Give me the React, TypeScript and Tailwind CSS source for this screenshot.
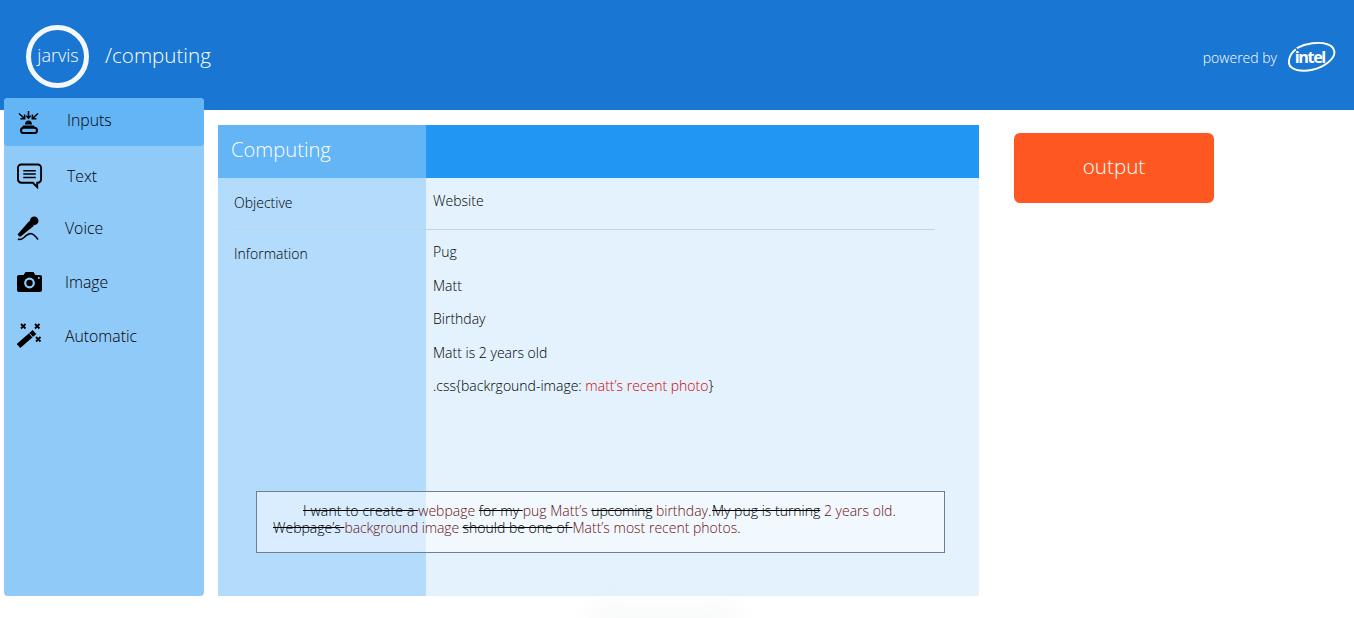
import React from 'react';

const InputsIcon = () => (
  <svg width="24" height="23" viewBox="0 0 24 23" fill="none" stroke="#000" strokeWidth="1.500">
    <path d="M11.500 0v7M9.300 4.800l2.200 2.400 2.200-2.400M2 2.500 7.500 7.500M3.500 7.800l4.200-.100L7.600 3.500M21 2.500 15.500 7.500M19.500 7.800l-4.200-.100.100-4.200" />
    <path d="M8 13.500c0-2.500 1.500-4 3.500-4s3.500 1.500 3.500 4z" fill="#000" stroke="none" />
    <path d="M6 14.500h11l1 2.500H5z" fill="#000" stroke="none" />
    <rect x="4" y="16.800" width="16" height="5.200" rx="2.600" strokeWidth="2" />
  </svg>
);

const TextIcon = () => (
  <svg width="27" height="26" viewBox="0 0 27 26" fill="none" stroke="#000" strokeWidth="2">
    <path d="M4.500 1h17A3.500 3.500 0 0 1 25 4.500v12a3.500 3.500 0 0 1-3.500 3.500h-.5v4.500L16.500 20h-12A3.500 3.500 0 0 1 1 16.500v-12A3.500 3.500 0 0 1 4.500 1z" />
    <path d="M6.500 7.500h13M6.500 11h13M6.500 14.500h13" strokeWidth="1.500" />
  </svg>
);

const VoiceIcon = () => (
  <svg width="23" height="25" viewBox="0 0 23 25" fill="none">
    <circle cx="17.200" cy="4.700" r="4.300" fill="#000" />
    <path d="M12.300 5 17 9.800 3 21 .5 18.500z" fill="#000" />
    <path d="M1 23c1.500 1 3.500.500 6-1.500 2.500-2.500 5-4.500 7.500-3.800 2.500.700 4.500 3 6.500 5.800" stroke="#000" strokeWidth="1.600" />
  </svg>
);

const ImageIcon = () => (
  <svg width="25" height="20" viewBox="0 0 25 20">
    <path
      d="M8.500 0h8l1.800 3H23a2 2 0 0 1 2 2v13a2 2 0 0 1-2 2H2a2 2 0 0 1-2-2V5a2 2 0 0 1 2-2h4.700z"
      fill="#000"
    />
    <circle cx="12.500" cy="11" r="5.400" fill="#90caf9" />
    <circle cx="12.500" cy="11" r="3.200" fill="#000" />
    <circle cx="21.800" cy="6" r="1" fill="#90caf9" />
  </svg>
);

const AutomaticIcon = () => (
  <svg width="26" height="26" viewBox="0 0 26 26" fill="none">
    <path d="M1.500 23 17.500 9" stroke="#000" strokeWidth="5.500" />
    <path d="M12.500 10.500 16 14.500" stroke="#90caf9" strokeWidth="1" />
    <path d="M4 1l4.500 4.500M8.500 1 4 5.500M18 1l4.500 4.500M22.500 1 18 5.500M19 14l4.500 4.500M23.500 14 19 18.500" stroke="#000" strokeWidth="1.800" />
  </svg>
);

const IntelLogo = () => (
  <svg width="48" height="34" viewBox="0 0 49 34" fill="none">
    <path
      d="M9 7C18 2 32 0 40 3c7 2 9 8 6 13-5 8-18 14-30 14C6 30 0 26 1 20c.300-4 3-9 7-12"
      stroke="#fff"
      strokeWidth="2"
    />
    <text x="7" y="22" fill="#fff" fontSize="16.500" fontWeight="700" fontFamily="'Open Sans', sans-serif" textLength="32">
      intel
    </text>
  </svg>
);

const navItems = [
  { label: 'Inputs', icon: <InputsIcon />, active: true, row: 'h-12', text: 'ml-[24px] -mt-[2px]' },
  { label: 'Text', icon: <TextIcon />, active: false, row: 'h-[60px]', text: 'ml-[24px] mt-[2px]' },
  { label: 'Voice', icon: <VoiceIcon />, active: false, row: 'h-[44px]', text: 'ml-[22px] mt-[2px]' },
  { label: 'Image', icon: <ImageIcon />, active: false, row: 'h-[64px]', text: 'ml-[22px] mt-[2px]' },
  { label: 'Automatic', icon: <AutomaticIcon />, active: false, row: 'h-[44px]', text: 'ml-[22px] mt-[2px]' },
];

const infoLines = ['Pug', 'Matt', 'Birthday', 'Matt is 2 years old'];

const Cut = ({ children, className = '' }: { children: React.ReactNode; className?: string }) => (
  <s className={`text-black ${className}`}>{children}</s>
);
const Red = ({ children }: { children: React.ReactNode }) => <span className="text-[#6a0f0f]">{children}</span>;

export default function App() {
  return (
    <div className="relative h-[618px] w-[1354px] overflow-hidden bg-white font-['Open_Sans',sans-serif] font-light text-black">
      <header className="flex h-[110px] items-start justify-between bg-[#1976d2] pl-[26px] pr-[18px] text-white">
        <div className="mt-[25px] flex items-center gap-4">
          <div className="flex h-[63px] w-[63px] items-center justify-center rounded-full border-[5px] border-white/95 pb-[3px] pl-px text-lg">jarvis</div>
          <span className="-mt-[2px] text-[20.600px]">/computing</span>
        </div>
        <div className="mt-[41px] flex items-center gap-[11px]">
          <span className="text-sm">powered by</span>
          <IntelLogo />
        </div>
      </header>

      <div className="flex items-start pl-1">
        <nav className="-mt-3 h-[498px] w-[200px] rounded bg-[#90caf9]">
          {navItems.map((item) => (
            <div key={item.label} className={`flex items-center pl-[13px] text-[15.800px] ${item.row} ${item.active ? 'rounded bg-[#64b5f6]' : ''}`}>
              <span className="flex w-[26px] justify-start">{item.icon}</span>
              <span className={item.text}>{item.label}</span>
            </div>
          ))}
        </nav>

        <main className="relative mt-[15px] ml-[14px] h-[471px] w-[761px] bg-[#e3f2fd]">
          <div className="absolute inset-y-0 left-0 w-[208px] bg-[#b3dbfc]" />
          <div className="relative flex h-[53px] bg-[#2196f3]">
            <div className="flex w-[208px] items-center bg-[#64b5f6] pb-[5px] pl-[13px] text-[20.200px] text-white">Computing</div>
          </div>
          <div className="relative flex h-[51px] text-sm">
            <div className="w-[208px] pl-4 pt-[15px]">Objective</div>
            <div className="pl-[7px] pt-[13px]">Website</div>
          </div>
          <div className="relative mr-11 ml-[14px] border-t border-[#c5d3e0]" />
          <div className="relative flex text-sm">
            <div className="w-[208px] pl-4 pt-[14px]">Information</div>
            <div className="flex flex-col gap-[14px] pl-[7px] pt-3">
              {infoLines.map((line) => (
                <div key={line} className="leading-[19.500px]">{line}</div>
              ))}
              <div className="leading-[19.500px]">
                .css{'{'}backrgound-image: <span className="text-[#d80000]">matt’s recent photo</span>{'}'}
              </div>
            </div>
          </div>
          <div className="absolute top-[366px] left-[38px] h-[62px] w-[689px] border border-[#6f7f90] bg-white/50 pt-[11px] pl-4 text-sm leading-[16.500px] indent-[30px]">
            <Cut className="tracking-[0.170px]">I want to create a </Cut><Red>webpage </Red><Cut>for my </Cut><Red>pug Matt’s </Red><Cut className="tracking-[-0.200px]">upcoming</Cut><Red> birthday</Red><span className="tracking-[-1.500px]">. </span><Cut>My pug is turning</Cut><Red> 2 years old</Red>.
            <br />
            <Cut>Webpage’s </Cut><span className="tracking-[-0.120px]"><Red>background image </Red></span><Cut>should be one of </Cut><Red>Matt’s most recent photos</Red>.
          </div>
        </main>

        <div className="mt-[23px] ml-[35px] flex h-[70px] w-[200px] items-center justify-center rounded-md bg-[#ff5722] pb-[4px] text-[20.600px] text-white">output</div>
      </div>
      <div className="absolute top-[607px] left-[590px] h-6 w-[150px] rounded-full bg-gray-200/30 blur-md" />
    </div>
  );
}
